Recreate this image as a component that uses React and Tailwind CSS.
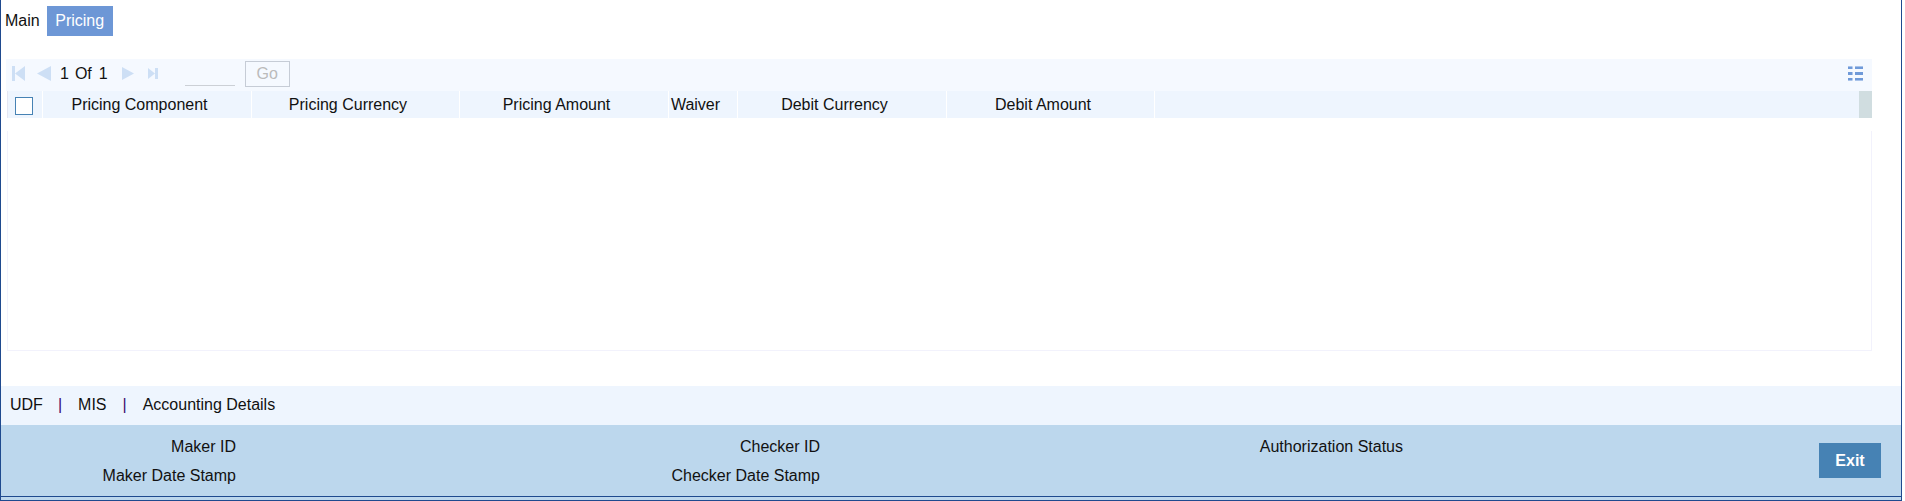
import React from "react";

const columns = [
  { label: "Pricing Component", w: "w-[209px]" },
  { label: "Pricing Currency", w: "w-[208px]" },
  { label: "Pricing Amount", w: "w-[209px]" },
  { label: "Waiver", w: "w-[69px]" },
  { label: "Debit Currency", w: "w-[209px]" },
  { label: "Debit Amount", w: "w-[208px]" },
];

export default function App() {
  return (
    <div className="w-[1902px] h-[501px] flex flex-col bg-white border-l border-r border-b border-[#1f4a8f] font-['Liberation_Sans',Arial,sans-serif] text-[16px] text-[#111]">
      {/* Tabs */}
      <div className="flex items-center pt-[6px] pl-[4px] h-[36px] shrink-0">
        <span className="mr-[7px] leading-[30px]">Main</span>
        <span className="h-[30px] w-[66px] flex items-center justify-center bg-[#6d97d6] text-white">Pricing</span>
      </div>

      {/* Grid toolbar */}
      <div className="mt-[23px] ml-[5px] w-[1866px] h-[32px] shrink-0 bg-[#f5f9ff] flex items-start pt-[2px]">
        <div className="flex items-center h-[24px] shrink-0">
          <svg width="40" height="15" viewBox="0 0 40 15" className="ml-[6px] shrink-0 text-[#cddff5]" fill="currentColor">
            <rect x="0" y="0" width="3" height="15" />
            <path d="M3 7.500 L13 0 V15 Z" />
            <path d="M25 7.500 L39 0 V15 Z" />
          </svg>
          <span className="ml-[8px] mt-[1px]">1</span>
          <span className="ml-[6px] mt-[1px]">Of</span>
          <span className="ml-[7px] mt-[1px]">1</span>
          <svg width="36" height="13" viewBox="0 0 36 13" className="ml-[14px] shrink-0 text-[#cddff5]" fill="currentColor">
            <path d="M12 6.500 L0 0 V13 Z" />
            <path d="M33 6.500 L26 1 V12 Z" />
            <rect x="33" y="1" width="3" height="11" />
          </svg>
        </div>
        <div className="ml-[27px] w-[50px] h-[25px] shrink-0 border-b border-[#ccd0d6]"></div>
        <button className="ml-[10px] w-[45px] h-[26px] shrink-0 border border-[#c6ccd6] text-[#bbbbbb] flex items-center justify-center">Go</button>
        <svg width="15" height="15" viewBox="0 0 15 15" className="ml-auto mr-[9px] mt-[5px] shrink-0">
          <g fill="#6f9ad9">
            <rect x="0" y="1" width="4.500" height="2" />
            <rect x="7" y="1" width="8" height="2" />
            <rect x="0" y="6" width="4.500" height="3" />
            <rect x="7" y="6" width="8" height="3" />
            <rect x="0" y="12" width="4.500" height="2" />
            <rect x="7" y="12" width="8" height="2" />
          </g>
          <g fill="#a9c3ea">
            <rect x="0" y="0" width="4.500" height="1" />
            <rect x="7" y="0" width="8" height="1" />
            <rect x="0" y="14" width="4.500" height="1" />
            <rect x="7" y="14" width="8" height="1" />
          </g>
        </svg>
      </div>

      {/* Header */}
      <div className="ml-[6px] w-[1865px] h-[27px] shrink-0 flex bg-[#eef5fe]">
        <div className="w-[36px] shrink-0 flex items-center justify-center border-l border-[#e4e6f2] border-r border-r-white">
          <span className="w-[18px] h-[18px] bg-white border border-[#4682b4] block ml-[-2px] mt-[3px]"></span>
        </div>
        {columns.map((c) => (
          <div key={c.label} className={`${c.w} shrink-0 flex items-center justify-center pr-[15px] border-r border-white`}>
            {c.label}
          </div>
        ))}
        <div className="ml-auto w-[13px] bg-[#d0dde0]"></div>
      </div>

      {/* Body */}
      <div className="mt-[13px] ml-[6px] w-[1865px] h-[220px] shrink-0 border-l border-r border-b border-[#f2f2fc]"></div>

      {/* Links */}
      <div className="mt-[35px] h-[39px] shrink-0 bg-[#eef5fe] flex items-center pl-[9px] pb-[1px]">
        <span>UDF</span>
        <span className="ml-[15px] text-[#3b0a6b]">|</span>
        <span className="ml-[16px]">MIS</span>
        <span className="ml-[16px] text-[#3b0a6b]">|</span>
        <span className="ml-[16px]">Accounting Details</span>
      </div>

      {/* Audit */}
      <div className="flex-1 bg-[#bcd7ed] flex flex-col">
        <div className="h-[71px] shrink-0 relative grid grid-cols-[235px_584px_583px_1fr] grid-rows-[29px_29px] pt-[10px]">
          <div className="text-right">Maker ID</div>
          <div className="text-right">Checker ID</div>
          <div className="text-right">Authorization Status</div>
          <div></div>
          <div className="text-right">Maker Date Stamp</div>
          <div className="text-right">Checker Date Stamp</div>
          <button className="absolute right-[20px] top-[18px] w-[62px] h-[35px] bg-[#4682b4] text-white font-bold flex items-center justify-center">Exit</button>
        </div>
        <div className="flex-1 border-t border-[#1f4a8f]"></div>
      </div>
    </div>
  );
}
